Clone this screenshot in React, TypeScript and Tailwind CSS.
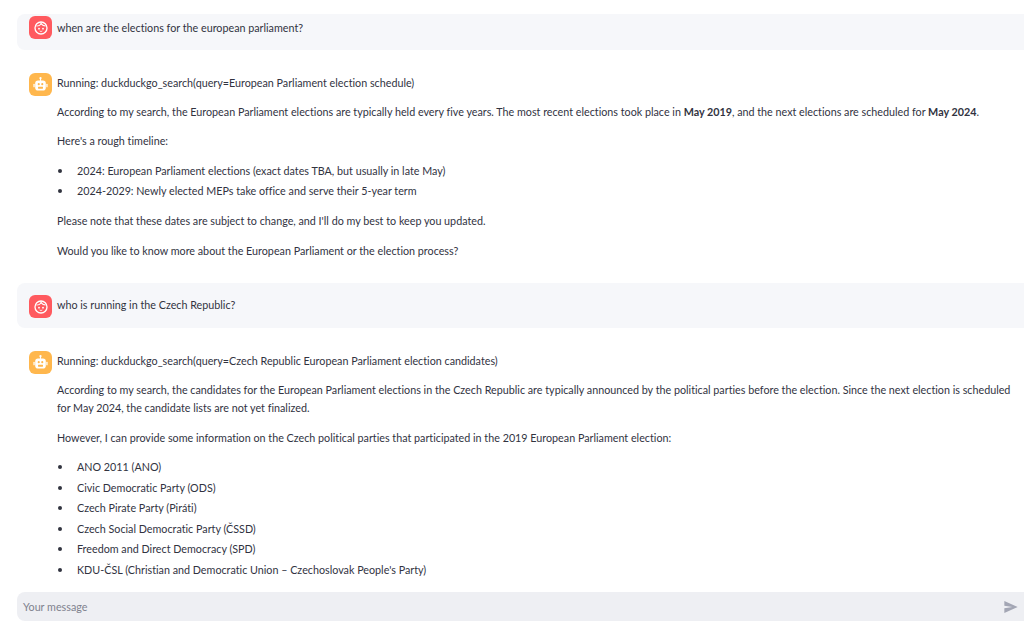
import type { ReactNode } from "react";

function UserAvatar() {
  return (
    <div className="flex h-[23px] w-[23px] shrink-0 items-center justify-center rounded-[6px] bg-[#ff5a5f]">
      <svg viewBox="0 0 24 24" className="h-[16px] w-[16px]" fill="none" stroke="white" strokeWidth="2">
        <circle cx="12" cy="12" r="9" />
        <path d="M5 9c3 0 6-.5 7-4 1.500 3 4 4 7 4" strokeWidth="1.600" />
        <circle cx="9" cy="13" r="1.400" fill="white" stroke="none" />
        <circle cx="15" cy="13" r="1.400" fill="white" stroke="none" />
        <path d="M10 16.500c1 .8 3 .8 4 0" strokeWidth="1.400" />
      </svg>
    </div>
  );
}

function BotAvatar() {
  return (
    <div className="flex h-[23px] w-[23px] shrink-0 items-center justify-center rounded-[6px] bg-[#ffb74d]">
      <svg viewBox="0 0 24 24" className="h-[17px] w-[17px]" fill="white">
        <circle cx="12" cy="3" r="1.600" />
        <rect x="11.200" y="4" width="1.600" height="3" />
        <path d="M8.500 6.500h7a4 4 0 0 1 4 4v6a4 4 0 0 1-4 4h-7a4 4 0 0 1-4-4v-6a4 4 0 0 1 4-4z" />
        <rect x="2" y="11" width="1.800" height="5" rx="0.900" />
        <rect x="20.200" y="11" width="1.800" height="5" rx="0.900" />
        <circle cx="9.500" cy="11.500" r="1.500" fill="#ffb74d" />
        <circle cx="14.500" cy="11.500" r="1.500" fill="#ffb74d" />
        <rect x="8.500" y="15" width="7" height="3" rx="0.600" fill="#ffb74d" />
      </svg>
    </div>
  );
}

function UserMessage({ className, children }: { className: string; children: ReactNode }) {
  return (
    <div className={`ml-[17px] flex items-start gap-[5px] rounded-l-[8px] bg-[#f6f7fa] pl-3 ${className}`}>
      <UserAvatar />
      <div className="leading-[18px]">{children}</div>
    </div>
  );
}

function Bullets({ items, className }: { items: string[]; className: string }) {
  return (
    <ul className={`ml-[77px] flex flex-col ${className}`}>
      {items.map((item) => (
        <li key={item} className="relative leading-[18px]">
          <span className="absolute left-[-19px] top-[7px] h-[4px] w-[4px] rounded-full bg-[#31333f]" />
          {item}
        </li>
      ))}
    </ul>
  );
}

export default function App() {
  return (
    <div className="flex h-[637px] w-[1024px] flex-col overflow-hidden bg-white font-['Lato',sans-serif] text-[10.75px] text-[#31333f] [font-variant-ligatures:none]">
      <UserMessage className="mt-[14px] h-[36px] pt-[2px]">
        <p className="pt-[3px]">when are the elections for the european parliament?</p>
      </UserMessage>

      <div className="mt-[23px] ml-[29px] flex gap-[5px]">
        <BotAvatar />
        <p className="pt-[1px] leading-[18px]">Running: duckduckgo_search(query=European Parliament election schedule)</p>
      </div>
      <div className="ml-[57px] flex flex-col pr-[5px]">
        <p className="mt-[7px] leading-[18px]">
          According to my search, the European Parliament elections are typically held every five years. The most recent elections took place in <b>May 2019</b>, and the next elections are scheduled for <b>May 2024</b>.
        </p>
        <p className="mt-[11px] leading-[18px]">Here's a rough timeline:</p>
      </div>
      <Bullets
        className="mt-[12px] gap-[2px]"
        items={["2024: European Parliament elections (exact dates TBA, but usually in late May)", "2024-2029: Newly elected MEPs take office and serve their 5-year term"]}
      />
      <div className="ml-[57px] flex flex-col pr-[5px]">
        <p className="mt-[12px] leading-[18px]">Please note that these dates are subject to change, and I'll do my best to keep you updated.</p>
        <p className="mt-[12px] leading-[18px]">Would you like to know more about the European Parliament or the election process?</p>
      </div>

      <UserMessage className="mt-[23px] h-[45px] pt-[12px]">
        <p className="pt-[1px]">who is running in the Czech Republic?</p>
      </UserMessage>

      <div className="mt-[23px] ml-[29px] flex gap-[5px]">
        <BotAvatar />
        <p className="pt-[1px] leading-[18px]">Running: duckduckgo_search(query=Czech Republic European Parliament election candidates)</p>
      </div>
      <div className="ml-[57px] flex flex-col pr-[5px]">
        <p className="mt-[7px] leading-[18px]">
          According to my search, the candidates for the European Parliament elections in the Czech Republic are typically announced by the political parties before the election. Since the next election is scheduled for May 2024, the candidate lists are not yet finalized.
        </p>
        <p className="mt-[12px] leading-[18px]">However, I can provide some information on the Czech political parties that participated in the 2019 European Parliament election:</p>
      </div>
      <Bullets
        className="mt-[11px] gap-[2.5px]"
        items={[
          "ANO 2011 (ANO)",
          "Civic Democratic Party (ODS)",
          "Czech Pirate Party (Piráti)",
          "Czech Social Democratic Party (ČSSD)",
          "Freedom and Direct Democracy (SPD)",
          "KDU-ČSL (Christian and Democratic Union – Czechoslovak People's Party)",
        ]}
      />

      <div className="mt-[13px] ml-[17px] flex h-[29px] items-center justify-between rounded-l-[8px] bg-[#eeeff3] pl-[6px] pr-[5px] pt-[1px]">
        <span className="pt-[1px] text-[#7f828e]">Your message</span>
        <svg viewBox="0 0 24 24" className="h-[16px] w-[16px] fill-[#a3a6b4]">
          <path d="M2 21l20-9L2 3v7l12 2-12 2z" />
        </svg>
      </div>
    </div>
  );
}
